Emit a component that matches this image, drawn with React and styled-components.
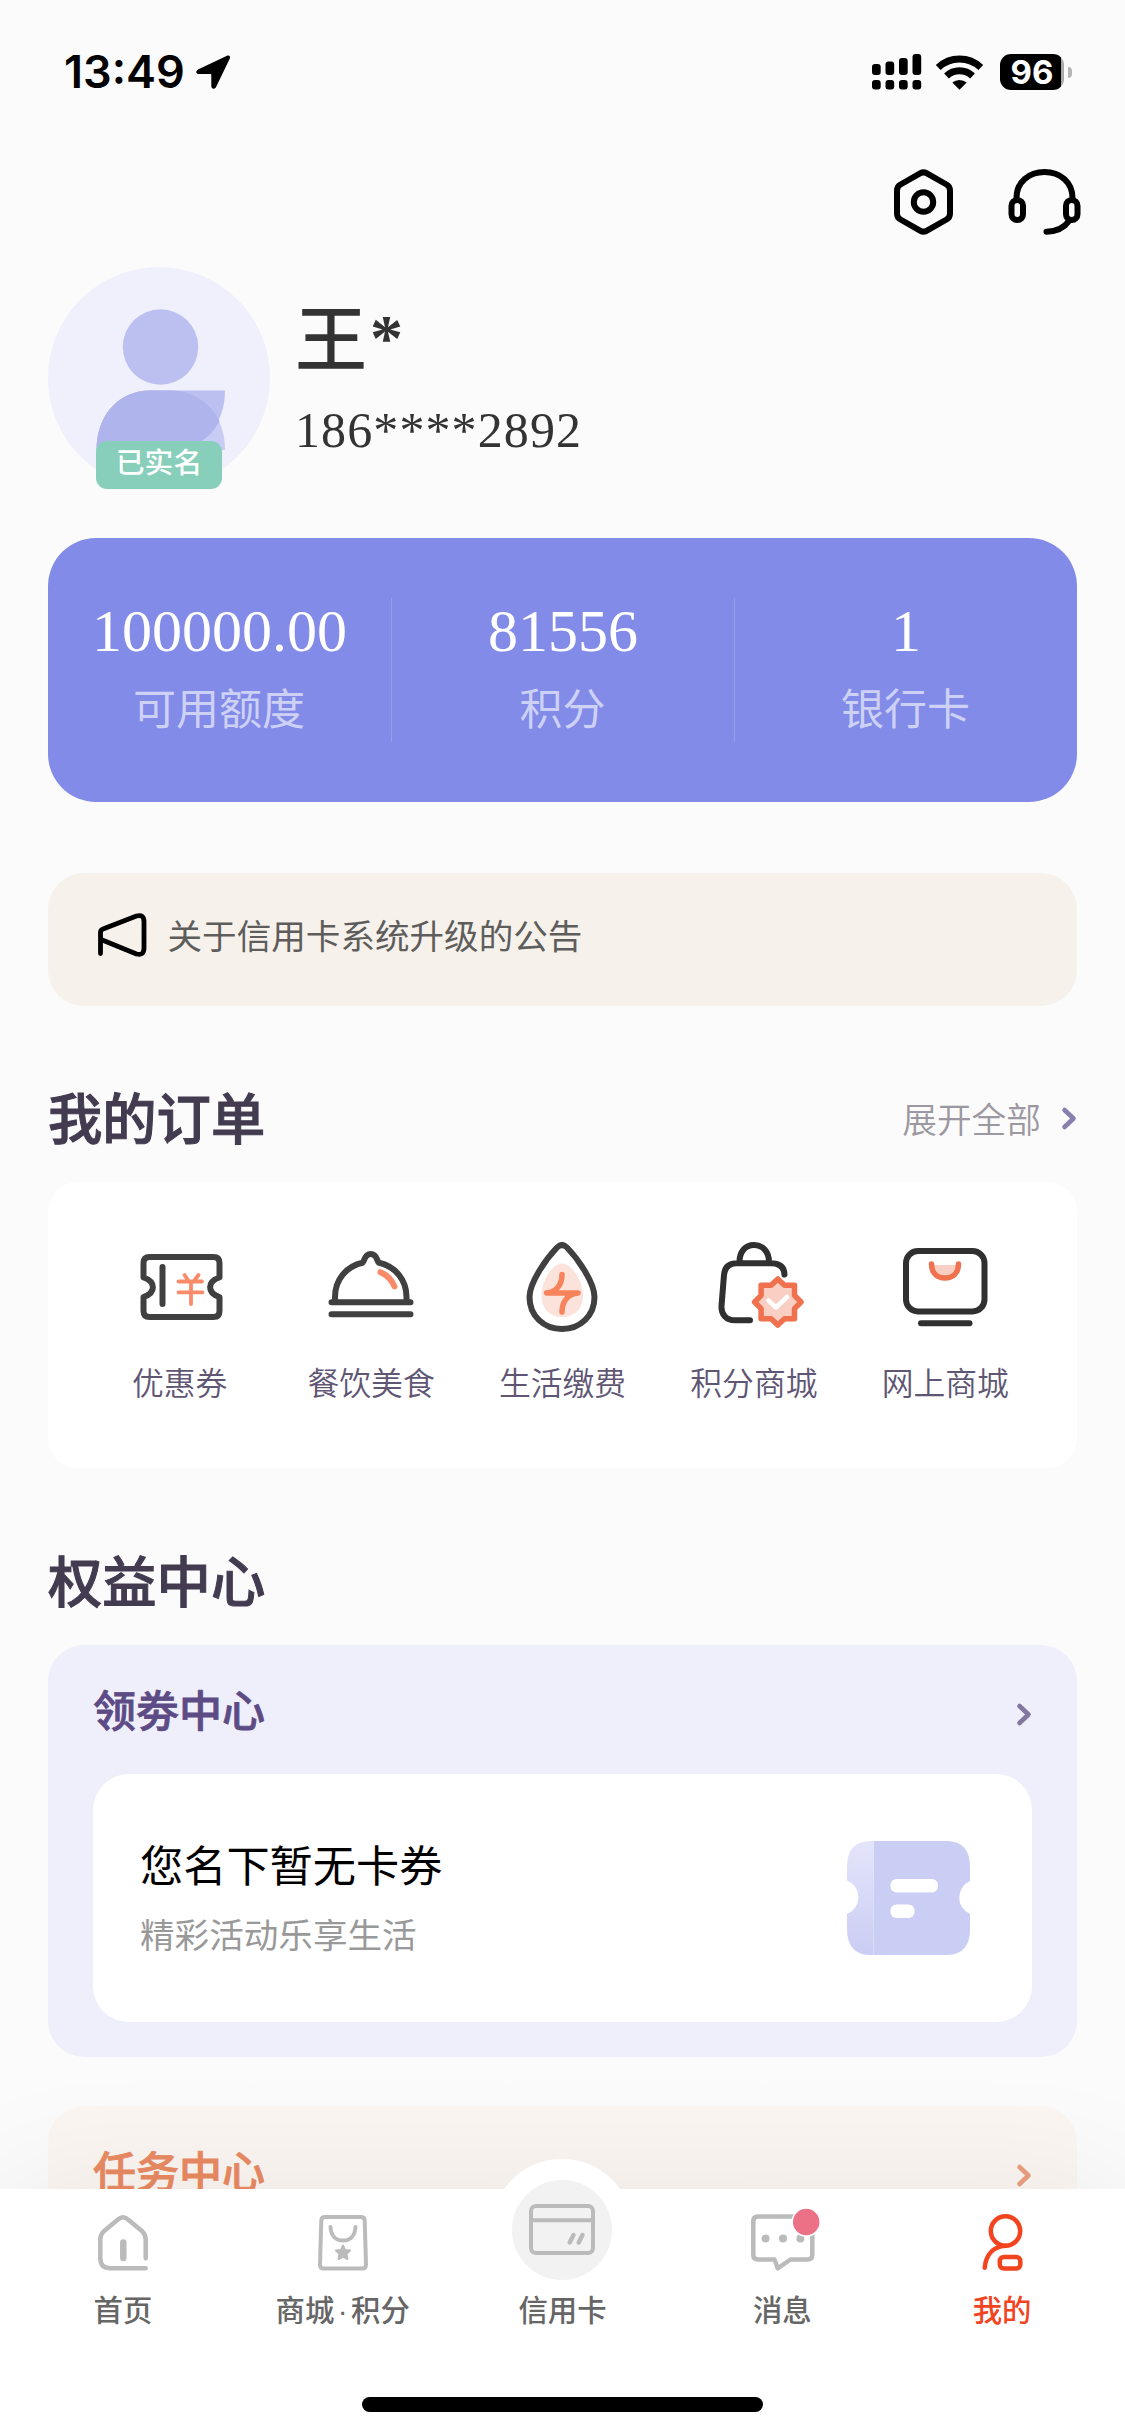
import React from 'react';
import styled, { createGlobalStyle } from 'styled-components';

const GlobalStyle = createGlobalStyle`
  * {
    box-sizing: border-box;
  }
  body {
    margin: 0;
    background: #fbfbfb;
    font-family: 'Liberation Sans', 'Noto Sans CJK SC', sans-serif;
  }
  svg {
    display: block;
    flex-shrink: 0;
    overflow: visible;
  }
`;

const Screen = styled.div`
  width: 1125px;
  height: 2435px;
  display: flex;
  flex-direction: column;
  overflow: hidden;
  background: #fbfbfb;
`;

const Content = styled.main`
  height: 2189px;
  padding: 0 48px;
  overflow: hidden;
`;

const StatusBar = styled.header`
  height: 144px;
  padding: 0 5px 0 16px;
  display: flex;
  justify-content: space-between;
  align-items: center;
`;

const StatusGroup = styled.div`
  display: flex;
  align-items: center;
`;

const Time = styled.span`
  width: 132px;
  font-family: Inter, sans-serif;
  font-size: 45px;
  font-weight: 600;
  line-height: 56px;
  white-space: nowrap;
`;

const Battery = styled.div`
  width: 64px;
  height: 36px;
  margin: 0 4px 0 17px;
  border-radius: 11px;
  background: linear-gradient(90deg, #000 61px, #aaa 61px);
  color: #fff;
  font-family: Inter, sans-serif;
  font-size: 33px;
  font-weight: 700;
  line-height: 36px;
  text-align: center;
`;

const BatteryTip = styled.div`
  width: 4px;
  height: 11px;
  border-radius: 0 5px 5px 0;
  background: #b5b5b5;
`;

const Actions = styled.div`
  height: 123px;
  padding-top: 25px;
  margin-right: -4px;
  display: flex;
  justify-content: flex-end;
  gap: 54px;
`;

const Profile = styled.section`
  height: 222px;
  display: flex;
`;

const Avatar = styled.div`
  position: relative;
  width: 222px;
  height: 222px;
`;

const Verified = styled.span`
  position: absolute;
  left: 48px;
  bottom: 0;
  width: 126px;
  height: 48px;
  border-radius: 11px;
  background: #87cfba;
  color: #fff;
  font-size: 28.8px;
  font-weight: 500;
  line-height: 45px;
  text-align: center;
`;

const Identity = styled.div`
  padding: 28px 0 0 25px;
  color: #333;
`;

const Name = styled.div`
  height: 92px;
  font-family: 'Liberation Serif', 'Noto Sans CJK SC', serif;
  font-size: 72px;
  font-weight: 500;
  line-height: 92px;
`;

const Star = styled.span`
  margin-left: 3px;
  font-size: 66px;
  font-weight: 700;
  line-height: 0;
  vertical-align: 5px;
`;

const Phone = styled.div`
  margin-top: 14px;
  font-family: 'Liberation Serif', serif;
  font-size: 50px;
  line-height: 58px;
  letter-spacing: 1.1px;
`;

const Stats = styled.section`
  height: 264px;
  margin-top: 49px;
  padding: 60px 0;
  display: grid;
  grid-template-columns: repeat(3, 1fr);
  border-radius: 48px;
  background: #828be7;
`;

const Stat = styled.div`
  border-left: ${(props) => (props.$first ? 'none' : '1px solid #969eec')};
  display: flex;
  flex-direction: column;
  align-items: center;
`;

const StatValue = styled.span`
  color: #fff;
  font-family: 'Liberation Serif', serif;
  font-size: 60px;
  line-height: 67px;
`;

const StatLabel = styled.span`
  margin-top: 15px;
  margin-right: 1px;
  color: #cdd1f6;
  font-size: 43px;
  line-height: 60px;
`;

const Notice = styled.section`
  height: 133px;
  margin-top: 71px;
  padding: 0 0 6px 50px;
  display: flex;
  align-items: center;
  gap: 20.5px;
  border-radius: 36px;
  background: #f6f1eb;
  color: #5e5d5b;
  font-size: 34.6px;
  line-height: 50px;

  svg {
    margin-top: -3px;
  }
`;

const SectionHead = styled.div`
  height: ${(props) => props.$height}px;
  padding-bottom: 23px;
  display: flex;
  align-items: flex-end;
  justify-content: space-between;
`;

const Title = styled.h2`
  margin: 0;
  color: #433b50;
  font-size: 54.3px;
  font-weight: 500;
  line-height: 76px;
  -webkit-text-stroke: 1px currentColor;
`;

const More = styled.span`
  height: 82px;
  display: flex;
  align-items: center;
  gap: 20px;
  color: #9b98a1;
  font-size: 34.7px;
  font-weight: 350;
`;

const Orders = styled.section`
  height: 286px;
  padding: 58px 36px 0;
  display: grid;
  grid-template-columns: repeat(5, 1fr);
  border-radius: 30px;
  background: #fff;
`;

const Order = styled.div`
  display: flex;
  flex-direction: column;
  align-items: center;
  color: #5f5674;
  font-size: 31.8px;
  font-weight: 350;
  line-height: 46px;
  white-space: nowrap;

  svg {
    margin-bottom: 25px;
  }
`;

const Panel = styled.section`
  height: 412px;
  margin-bottom: 49px;
  padding: 0 45px;
  border-radius: 36px;
  background: ${(props) => props.$bg};
`;

const PanelHead = styled.div`
  height: 129px;
  padding-bottom: 3px;
  display: flex;
  align-items: center;
  justify-content: space-between;
  color: ${(props) => props.$color};
  font-size: 43px;
  font-weight: 500;
  -webkit-text-stroke: 0.8px currentColor;

  svg {
    margin-top: 13px;
  }
`;

const Coupon = styled.div`
  height: 248px;
  padding: 0 62px 0 47px;
  display: flex;
  align-items: center;
  justify-content: space-between;
  border-radius: 36px;
  background: #fff;
`;

const CouponTitle = styled.div`
  color: #000;
  font-size: 43.2px;
  line-height: 62px;
`;

const CouponHint = styled.div`
  margin-top: 13px;
  color: #999;
  font-size: 34.6px;
  line-height: 50px;
`;

const TabBar = styled.nav`
  position: relative;
  height: 246px;
  background: #fff;
  box-shadow: 0 0 140px rgba(0, 0, 0, 0.07);
`;

const Tabs = styled.div`
  height: 208px;
  padding: 22px 13px 0;
  display: grid;
  grid-template-columns: repeat(5, 1fr);
`;

const Tab = styled.div`
  display: flex;
  flex-direction: column;
  align-items: center;
  color: ${(props) => (props.$active ? '#f1441f' : '#666')};
  font-size: 29.4px;
  font-weight: 500;
  line-height: 40px;
  white-space: nowrap;
`;

const Dot = styled.span`
  margin: 0 3.5px;
`;

const TabIcon = styled.div`
  height: 64px;
  margin-bottom: 15.5px;
  display: flex;
  align-items: center;
  justify-content: center;
`;

/* white ring rises over the top edge of the bar */
const CardButton = styled.div`
  width: 142px;
  height: 142px;
  flex-shrink: 0;
  margin-top: -27px;
  border: 21.5px solid #fff;
  border-radius: 50%;
  background: #f2f2f2;
  display: flex;
  align-items: center;
  justify-content: center;
`;

const HomeIndicator = styled.div`
  width: 401px;
  height: 15px;
  margin: 0 auto;
  border-radius: 8px;
  background: #000;
`;

const Spacer = styled.span`
  width: 15px;
`;

const Stroke = ({ width, height, color = '#404040', weight = 6, children }) => (
  <svg
    width={width}
    height={height}
    viewBox={`0 0 ${width} ${height}`}
    fill="none"
    stroke={color}
    strokeWidth={weight}
    strokeLinecap="round"
    strokeLinejoin="round"
  >
    {children}
  </svg>
);

const LocationIcon = () => (
  <svg width="35" height="34" viewBox="0 0 35 34">
    <path d="M31 .7 2.500 14.200C-.8 15.800-.2 19 3 19H14.300C15 19 15.300 19.300 15.300 20V31C15.300 34.300 18.800 34.800 20.200 31.700L33.800 3.500C34.800 1.200 33.200-.3 31 .7Z" />
  </svg>
);

const SignalIcon = () => (
  <svg width="49" height="36" viewBox="0 0 49 36">
    {[10, 7.5, 4, 0].map((y, i) => (
      <g key={y}>
        <rect x={i * 13.5} y={y} width="8.700" height={21 - y} rx="3" />
        <rect x={i * 13.5} y="26" width="8.700" height="9.500" rx="3" />
      </g>
    ))}
  </svg>
);

const WifiIcon = () => (
  <svg width="47" height="35" viewBox="0 0 47 35" fill="none" stroke="#000" strokeWidth="7">
    <path d="M2.200 12.500A31 31 0 0 1 44.800 12.500" />
    <path d="M10.500 21A19 19 0 0 1 36.500 21" />
    <path d="M16.300 27.600A11 11 0 0 1 30.700 27.600L23.500 34.800Z" fill="#000" stroke="none" />
  </svg>
);

const SettingsIcon = () => (
  <Stroke width={61} height={66} color="#000">
    <path d="M27.500 4.200Q30.500 2.500 33.500 4.200L53.500 15.500Q57 17.500 57 21.500V44.500Q57 48.500 53.500 50.500L33.500 61.800Q30.500 63.500 27.500 61.800L7.500 50.500Q4 48.500 4 44.500V21.500Q4 17.500 7.500 15.500Z" />
    <circle cx="30.500" cy="33" r="9.700" />
  </Stroke>
);

const ServiceIcon = () => (
  <Stroke width={73} height={67} color="#000">
    <path d="M8.500 29C8.500 13 21 3 36.500 3S64.500 13 64.500 29" />
    <rect x="3.500" y="31" width="11.500" height="20" rx="5.700" />
    <rect x="58" y="31" width="11.500" height="20" rx="5.700" />
    <path d="M61 52C56 59 48.500 62.500 38.500 62.700" />
  </Stroke>
);

const AvatarIcon = () => (
  <svg width="222" height="222" viewBox="0 0 222 222">
    <circle cx="111" cy="111" r="111" fill="#f0effc" />
    <circle cx="112.500" cy="80" r="37.700" fill="#bcc0f1" />
    <path d="M48.500 183C48.500 147 72 123.500 102 123.500H123C153 123.500 177 147 177 183Z" fill="#c8cbf4" />
    <path d="M102 123.500H177C177 158 155 183 120 183H48.500C48.500 147 72 123.500 102 123.500Z" fill="#bcc0f1" />
    <path d="M102 123.500H123C146 123.500 163 137 171.500 154C162 172 145 183 120 183H48.500C48.500 147 72 123.500 102 123.500Z" fill="#b0b4ed" />
  </svg>
);

const NoticeIcon = () => (
  <Stroke width={49} height={44} color="#000" weight={4.8}>
    <path d="M2.500 40.500V19.500Q2.500 17 5 16L38.500 3Q46 .8 46 9V35Q46 43 38.500 41L3 26.500" />
  </Stroke>
);

const Chevron = ({ color }) => (
  <Stroke width={16} height={23} color={color} weight={4.6}>
    <path d="M3.500 3 12.500 11.500 3.500 20" />
  </Stroke>
);

const CouponIcon = () => (
  <Stroke width={96} height={96}>
    <path d="M11.500 37.500V23Q11.500 17 17.500 17H81.500Q87.500 17 87.500 23V37.500C75 41.500 75 53 87.500 57V71Q87.500 77 81.500 77H17.500Q11.500 77 11.500 71V57C24 53 24 41.500 11.500 37.500Z" />
    <path d="M30.500 27V64" />
    <path d="M46.500 41.500H70M46.500 52.300H70.500M59 42V64M52.500 35 56.500 41M66.500 35 62 41" stroke="#f98b69" strokeWidth="3.800" />
  </Stroke>
);

const FoodIcon = () => (
  <Stroke width={96} height={96}>
    <path d="M12 61V57C12 40 23 26.500 39.500 22.800C42 21 41 14 47.700 14S53.500 21 56 22.800C72.500 26.500 83.500 40 83.500 57V61" />
    <path d="M8.500 62.300H87.500M8.500 74.300H87.500" />
    <path d="M57.500 32.200Q67.500 36.500 71.500 46.500" stroke="#f98b69" />
  </Stroke>
);

const LifeIcon = () => (
  <Stroke width={96} height={96}>
    <path d="M43 7.500Q48 2.500 53 7.500C65 20 80.500 43 80.500 57C80.500 76 66 89 48 89S15.500 76 15.500 57C15.500 43 31 20 43 7.500Z" />
    <path d="M48 23.500C59 24 69 42 69 56C69 69 60 77 48 77S27.500 69 27.500 56C27.500 42 37 24 48 23.500Z" fill="#fbe3db" stroke="none" />
    <path d="M48 34.500C48 44 43 52 32.500 53H64C53.500 54 48 62 48 72" stroke="#f7835c" strokeWidth="5.500" />
  </Stroke>
);

const PointsIcon = () => (
  <Stroke width={96} height={96} color="#303030">
    <path d="M44 80.300H29C20 80.300 15 74 15.500 66L18 35Q19 23.300 31 23.300H65Q78 23.300 78.500 34.500M33.500 22C33.500 12 39 5 48 5S63 12 63 22" />
    <path
      d="M71.800 39 78.500 45.300H88.500V55.300L95 62 88.500 68.700V78.700H78.500L71.800 85 65.100 78.700H55.100V68.700L48.600 62 55.100 55.300V45.300H65.100Z"
      fill="#f9cfc4"
      stroke="#f0714e"
      strokeWidth="5.500"
    />
    <path d="M62.500 60.500 70 67.500 81 57" stroke="#fff" strokeWidth="4.500" />
  </Stroke>
);

const MallIcon = () => (
  <Stroke width={96} height={96} color="#303030">
    <rect x="9" y="11" width="78.500" height="60.500" rx="12" />
    <path d="M24 83.200H72.500" />
    <path d="M36 25H60Q58 38 48 38T36 25Z" fill="#f9cfc4" stroke="none" />
    <path d="M34.500 24C34.500 33 40 38 48 38S61.500 33 61.500 24" stroke="#f0714e" strokeWidth="5.500" />
  </Stroke>
);

const TicketArt = () => (
  <svg width="123" height="114" viewBox="0 0 123 114">
    <defs>
      <linearGradient id="stub" x1="0" y1="0" x2="0" y2="1">
        <stop offset="0" stopColor="#e4e5fa" />
        <stop offset="1" stopColor="#cacdf4" />
      </linearGradient>
    </defs>
    <path d="M26.500 0H101Q123 1 123 26V40A18 18 0 0 0 123 73V88Q123 113 101 114H26.500Z" fill="#cacdf4" />
    <path d="M26.500 0H22Q0 1 0 26V39.500A18 18 0 0 1 0 73V88Q0 113 22 114H26.500Z" fill="url(#stub)" />
    <rect x="43.500" y="38" width="47.500" height="13.500" rx="6" fill="#fff" />
    <rect x="43.500" y="63.500" width="24" height="13.500" rx="6" fill="#fff" />
  </svg>
);

const TabHomeIcon = () => (
  <Stroke width={64} height={64} color="#bbb" weight={4.5}>
    <path d="M54.700 47.300V28.500Q54.700 24 51.500 20.500L37 8.500Q32 4 27 8.500L12.500 20.500Q9.300 24 9.300 28.500V47Q9.300 57.300 19.500 57.300H54.700" />
    <path d="M32.300 31.500V47" strokeWidth="6.500" />
  </Stroke>
);

const TabMallIcon = () => (
  <Stroke width={64} height={64} color="#bbb" weight={4}>
    <path d="M14 6H50Q53.500 6 53.700 9.500L55 53.500Q55 57.500 51.500 57.500H12.500Q9 57.500 9 53.500L10.300 9.500Q10.500 6 14 6Z" />
    <path d="M19.500 16C20 25 25 29.500 32 29.500S44 25 44.500 16" />
    <path d="M32 34.500 34 39 39 39.500 35.500 43 36.500 48 32 45.700 27.500 48 28.500 43 25 39.500 30 39Z" fill="#bbb" strokeWidth="2" />
  </Stroke>
);

const TabCardIcon = () => (
  <Stroke width={66} height={51} color="#bbb" weight={4}>
    <rect x="2" y="2" width="62" height="47" rx="5" />
    <path d="M2 16.300H64" />
    <path d="M40.700 38.500 44.500 31M49.700 38.500 53.500 31" strokeWidth="4.500" />
  </Stroke>
);

const TabMessageIcon = () => (
  <Stroke width={64} height={64} color="#bbb" weight={4.5}>
    <path d="M8 5.500H57.500Q62.300 5.500 62.300 10V44Q62.300 48.500 57.500 48.500H40.500L27.700 57.300 24.500 48.500H8Q3.300 48.500 3.300 44V10Q3.300 5.500 8 5.500Z" />
    <g fill="#bbb" stroke="none">
      <circle cx="15.500" cy="27.500" r="4" />
      <circle cx="33" cy="27.500" r="4" />
      <circle cx="50.400" cy="27.500" r="4" />
    </g>
    <circle cx="56.200" cy="11" r="14" fill="#ec7086" stroke="#fff" strokeWidth="1.500" />
  </Stroke>
);

const TabMeIcon = () => (
  <Stroke width={64} height={64} color="#f1441f" weight={4.5}>
    <circle cx="35.500" cy="20" r="14.700" />
    <path d="M35.500 34.700C24 35.500 16 43 14.700 56.800" />
    <rect x="29.800" y="46" width="20.500" height="11.500" rx="4" />
  </Stroke>
);

const stats = [
  { value: '100000.00', label: '可用额度' },
  { value: '81556', label: '积分' },
  { value: '1', label: '银行卡' },
];

const orders = [
  { label: '优惠券', icon: <CouponIcon /> },
  { label: '餐饮美食', icon: <FoodIcon /> },
  { label: '生活缴费', icon: <LifeIcon /> },
  { label: '积分商城', icon: <PointsIcon /> },
  { label: '网上商城', icon: <MallIcon /> },
];

const tabs = [
  { id: 'home', label: '首页', icon: <TabHomeIcon /> },
  { id: 'mall', label: <span>商城<Dot>·</Dot>积分</span>, icon: <TabMallIcon /> },
  { id: 'card', label: '信用卡', icon: <CardButton><TabCardIcon /></CardButton> },
  { id: 'message', label: '消息', icon: <TabMessageIcon /> },
  { id: 'me', label: '我的', icon: <TabMeIcon />, active: true },
];

function App() {
  return (
    <Screen>
      <GlobalStyle />
      <Content>
        <StatusBar>
          <StatusGroup>
            <Time>13:49</Time>
            <LocationIcon />
          </StatusGroup>
          <StatusGroup>
            <SignalIcon />
            <Spacer />
            <WifiIcon />
            <Battery>96</Battery>
            <BatteryTip />
          </StatusGroup>
        </StatusBar>
        <Actions>
          <SettingsIcon />
          <ServiceIcon />
        </Actions>
        <Profile>
          <Avatar>
            <AvatarIcon />
            <Verified>已实名</Verified>
          </Avatar>
          <Identity>
            <Name>王<Star>*</Star></Name>
            <Phone>186****2892</Phone>
          </Identity>
        </Profile>
        <Stats>
          {stats.map((item, i) => (
            <Stat key={item.label} $first={i === 0}>
              <StatValue>{item.value}</StatValue>
              <StatLabel>{item.label}</StatLabel>
            </Stat>
          ))}
        </Stats>
        <Notice>
          <NoticeIcon />
          <span>关于信用卡系统升级的公告</span>
        </Notice>
        <SectionHead $height={176}>
          <Title>我的订单</Title>
          <More>
            展开全部
            <Chevron color="#897fae" />
          </More>
        </SectionHead>
        <Orders>
          {orders.map((item) => (
            <Order key={item.label}>
              {item.icon}
              {item.label}
            </Order>
          ))}
        </Orders>
        <SectionHead $height={177}>
          <Title>权益中心</Title>
        </SectionHead>
        <Panel $bg="#efeffb">
          <PanelHead $color="#5c4b85">
            领劵中心
            <Chevron color="#83769f" />
          </PanelHead>
          <Coupon>
            <div>
              <CouponTitle>您名下暂无卡券</CouponTitle>
              <CouponHint>精彩活动乐享生活</CouponHint>
            </div>
            <TicketArt />
          </Coupon>
        </Panel>
        <Panel $bg="#fcf6f3">
          <PanelHead $color="#ea8a62">
            任务中心
            <Chevron color="#eba080" />
          </PanelHead>
        </Panel>
      </Content>
      <TabBar>
        <Tabs>
          {tabs.map((tab) => (
            <Tab key={tab.id} $active={tab.active}>
              <TabIcon>{tab.icon}</TabIcon>
              {tab.label}
            </Tab>
          ))}
        </Tabs>
        <HomeIndicator />
      </TabBar>
    </Screen>
  );
}

export default App;
